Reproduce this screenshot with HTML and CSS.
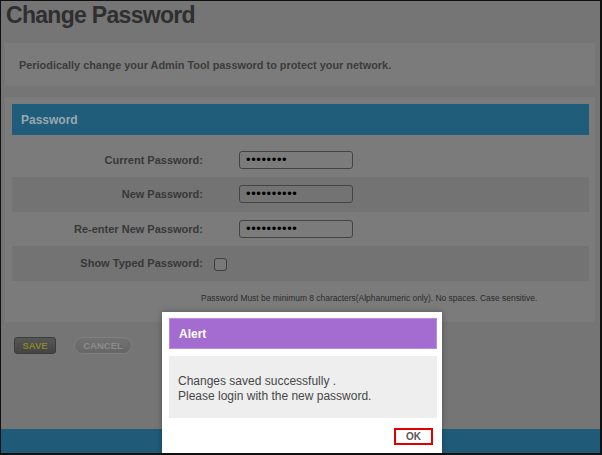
FILE: index.html
```html
<!DOCTYPE html>
<html lang="en">
<head>
    <meta charset="UTF-8">
    <meta name="viewport" content="width=device-width, initial-scale=1.0">
    <title>Change Password</title>
    <link rel="stylesheet" href="styles.css">
</head>
<body>
    <div class="frame">
        <div class="page">
            <h1>Change Password</h1>
            <div class="intro">Periodically change your Admin Tool password to protect your network.</div>

            <div class="panel">
                <div class="panel-head">Password</div>
                <div class="rows">
                    <div class="row">
                        <span class="label">Current Password:</span>
                        <div class="pw">&bull;&bull;&bull;&bull;&bull;&bull;&bull;&bull;</div>
                    </div>
                    <div class="row shade">
                        <span class="label">New Password:</span>
                        <div class="pw">&bull;&bull;&bull;&bull;&bull;&bull;&bull;&bull;&bull;&bull;</div>
                    </div>
                    <div class="row">
                        <span class="label">Re-enter New Password:</span>
                        <div class="pw">&bull;&bull;&bull;&bull;&bull;&bull;&bull;&bull;&bull;&bull;</div>
                    </div>
                    <div class="row shade">
                        <span class="label">Show Typed Password:</span>
                        <span class="check"></span>
                    </div>
                </div>
                <p class="note">Password Must be minimum 8 characters(Alphanumeric only). No spaces. Case sensitive.</p>
            </div>

            <div class="actions">
                <button class="btn-save">SAVE</button>
                <button class="btn-cancel">CANCEL</button>
            </div>

            <footer class="footer"></footer>
        </div>

        <div class="modal">
            <div class="modal-head">Alert</div>
            <div class="modal-body">
                Changes saved successfully .<br>
                Please login with the new password.
            </div>
            <div class="modal-foot">
                <button class="btn-ok">OK</button>
            </div>
        </div>
    </div>
</body>
</html>
```

FILE: styles.css
```css
body, html {
    margin: 0;
    padding: 0;
    font-family: "Liberation Sans", Arial, sans-serif;
    background: #111;
}
.frame {
    position: relative;
    width: 599px;
    height: 452px;
    border-left: 1px solid #111;
    border-top: 1px solid #111;
    border-right: 2px solid #111;
    border-bottom: 2px solid #111;
    overflow: hidden;
    background: #757575;
}
.page {
    display: flex;
    flex-direction: column;
    height: 100%;
    padding: 0 5px 0 4px;
    box-sizing: border-box;
}
h1 {
    margin: 0 0 0 1px;
    font-size: 23px;
    line-height: 29px;
    letter-spacing: -0.7px;
    color: #2f2f2f;
}
.intro {
    margin-top: 13px;
    height: 43px;
    display: flex;
    align-items: center;
    padding-left: 14px;
    background: #7b7b7b;
    font-size: 10.9px;
    font-weight: bold;
    color: #3c3c3c;
}
.panel {
    margin-top: 11px;
    background: #7b7b7b;
    padding: 7px 6px 16px 7px;
}
.panel-head {
    height: 31px;
    display: flex;
    align-items: center;
    padding-left: 9px;
    background: #1f5d7b;
    color: #9aa7ae;
    font-size: 12px;
    font-weight: bold;
}
.rows {
    margin-top: 7.5px;
}
.row {
    height: 34.5px;
    display: flex;
    align-items: center;
}
.row.shade {
    background: #737373;
}
.label {
    width: 191px;
    text-align: right;
    font-size: 11px;
    font-weight: bold;
    color: #383838;
}
.pw {
    margin-left: 36px;
    width: 106px;
    height: 16px;
    border: 1px solid #444;
    border-radius: 3px;
    box-sizing: content-box;
    padding-left: 6px;
    font-size: 13px;
    line-height: 16px;
    letter-spacing: 0.6px;
    color: #000;
}
.check {
    margin-left: 11px;
    margin-top: 3px;
    width: 11px;
    height: 11px;
    border: 1px solid #3e3e3e;
    border-radius: 3px;
    background: #787878;
}
.note {
    margin: 10px 0 0;
    line-height: 15px;
    font-size: 8.45px;
    color: #2c2c2c;
    padding-left: 189px;
}
.actions {
    display: flex;
    gap: 18px;
    margin-top: 15px;
    padding-left: 9px;
}
.actions button {
    font-family: "Liberation Sans", Arial, sans-serif;
    font-size: 9.5px;
    font-weight: bold;
    height: 17px;
    padding: 0;
    cursor: pointer;
}
.btn-save {
    width: 42px;
    border: 1px solid #3c3c3c;
    border-radius: 3px;
    background: linear-gradient(#565656, #444);
    color: #8a8626;
}
.btn-cancel {
    width: 58px;
    border: 1px solid #808080;
    border-radius: 9px;
    background: linear-gradient(#727272, #666);
    color: #8c8c8c;
}
.footer {
    margin: auto -5px 0 -4px;
    height: 24px;
    background: #1f5b78;
}
.modal {
    position: absolute;
    left: 161px;
    top: 311px;
    width: 280px;
    height: 160px;
    background: #fff;
    padding: 6px 5px 0 7px;
    box-sizing: border-box;
    box-shadow: 0 0 6px rgba(0, 0, 0, 0.3);
}
.modal-head {
    height: 31px;
    display: flex;
    align-items: center;
    padding-left: 9px;
    background: #a46bd0;
    border: 1px solid #b88ddd;
    box-sizing: border-box;
    color: #fff;
    font-size: 12px;
    font-weight: bold;
}
.modal-body {
    margin-top: 7px;
    height: 62px;
    box-sizing: border-box;
    padding: 18px 9px 0;
    background: #eeeeee;
    font-size: 12px;
    line-height: 14.5px;
    color: #474747;
}
.modal-foot {
    display: flex;
    justify-content: flex-end;
    padding: 10px 4px 0 0;
}
.btn-ok {
    width: 39px;
    height: 17px;
    padding: 0;
    border: 2px solid #e10000;
    background: #fff;
    font-family: "Liberation Sans", Arial, sans-serif;
    font-size: 10px;
    font-weight: bold;
    color: #555;
}
```
